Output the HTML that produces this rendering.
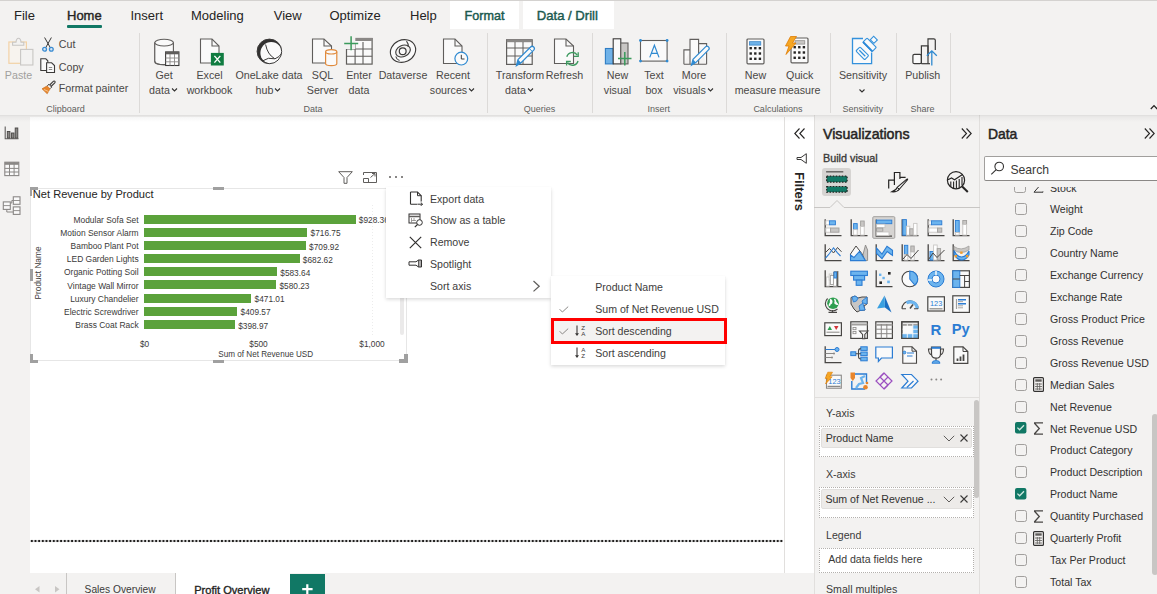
<!DOCTYPE html>
<html><head><meta charset="utf-8"><style>
html,body{margin:0;padding:0;width:1157px;height:594px;overflow:hidden;background:#f3f2f1;font-family:"Liberation Sans",sans-serif;}
.r{position:absolute;}
.t{position:absolute;line-height:16px;white-space:pre;}
.s{position:absolute;overflow:visible;}
</style></head><body>
<div class="r" style="left:0px;top:0px;width:1157px;height:594px;background:#f3f2f1;"></div>
<div class="r" style="left:0px;top:0px;width:1157px;height:1px;background:#d4d2d0;"></div>
<div class="r" style="left:450px;top:1px;width:69px;height:28px;background:#ffffff;"></div>
<div class="r" style="left:522.5px;top:1px;width:91px;height:28px;background:#ffffff;"></div>
<div class="r" style="left:30px;top:117px;width:754px;height:456px;background:#ffffff;"></div>
<div class="r" style="left:784px;top:117px;width:1px;height:456px;background:#e1dfdd;"></div>
<div class="r" style="left:785px;top:117px;width:29px;height:456px;background:#ffffff;"></div>
<div class="r" style="left:814px;top:115px;width:1px;height:479px;background:#e1dfdd;"></div>
<div class="r" style="left:979px;top:115px;width:1px;height:479px;background:#e1dfdd;"></div>
<div class="r" style="left:0px;top:114.5px;width:1157px;height:7px;background:linear-gradient(rgba(0,0,0,0.09),rgba(0,0,0,0.04) 25%,rgba(0,0,0,0) 100%);"></div>
<div class="t" style="left:14px;top:7.5px;font-size:13px;color:#252423;font-weight:normal;">File</div>
<div class="t" style="left:67px;top:7.5px;font-size:13px;color:#252423;font-weight:normal;-webkit-text-stroke:0.4px #252423">Home</div>
<div class="r" style="left:67px;top:25px;width:35px;height:3px;background:#117865;border-radius:1px"></div>
<div class="t" style="left:130.5px;top:7.5px;font-size:13px;color:#252423;font-weight:normal;">Insert</div>
<div class="t" style="left:191px;top:7.5px;font-size:13px;color:#252423;font-weight:normal;">Modeling</div>
<div class="t" style="left:273.75px;top:7.5px;font-size:13px;color:#252423;font-weight:normal;">View</div>
<div class="t" style="left:329.5px;top:7.5px;font-size:13px;color:#252423;font-weight:normal;">Optimize</div>
<div class="t" style="left:410px;top:7.5px;font-size:13px;color:#252423;font-weight:normal;">Help</div>
<div class="t" style="left:464.5px;top:7.5px;font-size:12.6px;color:#1b5a4f;font-weight:normal;-webkit-text-stroke:0.45px #1b5a4f">Format</div>
<div class="t" style="left:536.75px;top:7.5px;font-size:13.1px;color:#1b5a4f;font-weight:normal;-webkit-text-stroke:0.45px #1b5a4f">Data / Drill</div>
<div class="r" style="left:139px;top:33px;width:1px;height:80px;background:#dcdad8;"></div>
<div class="r" style="left:487px;top:33px;width:1px;height:80px;background:#dcdad8;"></div>
<div class="r" style="left:592px;top:33px;width:1px;height:80px;background:#dcdad8;"></div>
<div class="r" style="left:726px;top:33px;width:1px;height:80px;background:#dcdad8;"></div>
<div class="r" style="left:830px;top:33px;width:1px;height:80px;background:#dcdad8;"></div>
<div class="r" style="left:896px;top:33px;width:1px;height:80px;background:#dcdad8;"></div>
<div class="r" style="left:950px;top:33px;width:1px;height:80px;background:#dcdad8;"></div>
<div class="t" style="left:-131.5px;width:300px;text-align:center;top:67.2px;font-size:10.7px;color:#a19f9d;font-weight:normal;">Paste</div>
<div class="t" style="left:58.75px;top:36.0px;font-size:10.7px;color:#4a4846;font-weight:normal;">Cut</div>
<div class="t" style="left:58.75px;top:58.7px;font-size:10.7px;color:#4a4846;font-weight:normal;">Copy</div>
<div class="t" style="left:58.75px;top:80.0px;font-size:10.7px;color:#4a4846;font-weight:normal;">Format painter</div>
<div class="t" style="left:-84.5px;width:300px;text-align:center;top:100.8px;font-size:9px;color:#605e5c;font-weight:normal;">Clipboard</div>
<div class="t" style="left:163px;width:300px;text-align:center;top:100.8px;font-size:9px;color:#605e5c;font-weight:normal;">Data</div>
<div class="t" style="left:389.4px;width:300px;text-align:center;top:100.8px;font-size:9px;color:#605e5c;font-weight:normal;">Queries</div>
<div class="t" style="left:508.75px;width:300px;text-align:center;top:100.8px;font-size:9px;color:#605e5c;font-weight:normal;">Insert</div>
<div class="t" style="left:627.9px;width:300px;text-align:center;top:100.8px;font-size:9px;color:#605e5c;font-weight:normal;">Calculations</div>
<div class="t" style="left:712.75px;width:300px;text-align:center;top:100.8px;font-size:9px;color:#605e5c;font-weight:normal;">Sensitivity</div>
<div class="t" style="left:772.5px;width:300px;text-align:center;top:100.8px;font-size:9px;color:#605e5c;font-weight:normal;">Share</div>
<div class="t" style="left:14px;width:300px;text-align:center;top:67.2px;font-size:10.7px;color:#4a4846;font-weight:normal;">Get</div>
<div class="t" style="left:14px;width:300px;text-align:center;top:82.2px;font-size:10.7px;color:#4a4846;font-weight:normal;">data<svg width="9" height="6" viewBox="0 0 9 6" style="vertical-align:1px"><path d="M2 1.5 L4.5 4 L7 1.5" fill="none" stroke="#323130" stroke-width="1.1"/></svg></div>
<div class="t" style="left:59.5px;width:300px;text-align:center;top:67.2px;font-size:10.7px;color:#4a4846;font-weight:normal;">Excel</div>
<div class="t" style="left:59.5px;width:300px;text-align:center;top:82.2px;font-size:10.7px;color:#4a4846;font-weight:normal;">workbook</div>
<div class="t" style="left:119px;width:300px;text-align:center;top:67.2px;font-size:10.7px;color:#4a4846;font-weight:normal;">OneLake data</div>
<div class="t" style="left:119px;width:300px;text-align:center;top:82.2px;font-size:10.7px;color:#4a4846;font-weight:normal;">hub<svg width="9" height="6" viewBox="0 0 9 6" style="vertical-align:1px"><path d="M2 1.5 L4.5 4 L7 1.5" fill="none" stroke="#323130" stroke-width="1.1"/></svg></div>
<div class="t" style="left:172.5px;width:300px;text-align:center;top:67.2px;font-size:10.7px;color:#4a4846;font-weight:normal;">SQL</div>
<div class="t" style="left:172.5px;width:300px;text-align:center;top:82.2px;font-size:10.7px;color:#4a4846;font-weight:normal;">Server</div>
<div class="t" style="left:209px;width:300px;text-align:center;top:67.2px;font-size:10.7px;color:#4a4846;font-weight:normal;">Enter</div>
<div class="t" style="left:209px;width:300px;text-align:center;top:82.2px;font-size:10.7px;color:#4a4846;font-weight:normal;">data</div>
<div class="t" style="left:253px;width:300px;text-align:center;top:67.2px;font-size:10.7px;color:#4a4846;font-weight:normal;">Dataverse</div>
<div class="t" style="left:303px;width:300px;text-align:center;top:67.2px;font-size:10.7px;color:#4a4846;font-weight:normal;">Recent</div>
<div class="t" style="left:303px;width:300px;text-align:center;top:82.2px;font-size:10.7px;color:#4a4846;font-weight:normal;">sources<svg width="9" height="6" viewBox="0 0 9 6" style="vertical-align:1px"><path d="M2 1.5 L4.5 4 L7 1.5" fill="none" stroke="#323130" stroke-width="1.1"/></svg></div>
<div class="t" style="left:370px;width:300px;text-align:center;top:67.2px;font-size:10.7px;color:#4a4846;font-weight:normal;">Transform</div>
<div class="t" style="left:370px;width:300px;text-align:center;top:82.2px;font-size:10.7px;color:#4a4846;font-weight:normal;">data<svg width="9" height="6" viewBox="0 0 9 6" style="vertical-align:1px"><path d="M2 1.5 L4.5 4 L7 1.5" fill="none" stroke="#323130" stroke-width="1.1"/></svg></div>
<div class="t" style="left:414.5px;width:300px;text-align:center;top:67.2px;font-size:10.7px;color:#4a4846;font-weight:normal;">Refresh</div>
<div class="t" style="left:467.5px;width:300px;text-align:center;top:67.2px;font-size:10.7px;color:#4a4846;font-weight:normal;">New</div>
<div class="t" style="left:467.5px;width:300px;text-align:center;top:82.2px;font-size:10.7px;color:#4a4846;font-weight:normal;">visual</div>
<div class="t" style="left:504px;width:300px;text-align:center;top:67.2px;font-size:10.7px;color:#4a4846;font-weight:normal;">Text</div>
<div class="t" style="left:504px;width:300px;text-align:center;top:82.2px;font-size:10.7px;color:#4a4846;font-weight:normal;">box</div>
<div class="t" style="left:544px;width:300px;text-align:center;top:67.2px;font-size:10.7px;color:#4a4846;font-weight:normal;">More</div>
<div class="t" style="left:544px;width:300px;text-align:center;top:82.2px;font-size:10.7px;color:#4a4846;font-weight:normal;">visuals<svg width="9" height="6" viewBox="0 0 9 6" style="vertical-align:1px"><path d="M2 1.5 L4.5 4 L7 1.5" fill="none" stroke="#323130" stroke-width="1.1"/></svg></div>
<div class="t" style="left:605.5px;width:300px;text-align:center;top:67.2px;font-size:10.7px;color:#4a4846;font-weight:normal;">New</div>
<div class="t" style="left:605.5px;width:300px;text-align:center;top:82.2px;font-size:10.7px;color:#4a4846;font-weight:normal;">measure</div>
<div class="t" style="left:649.75px;width:300px;text-align:center;top:67.2px;font-size:10.7px;color:#4a4846;font-weight:normal;">Quick</div>
<div class="t" style="left:649.75px;width:300px;text-align:center;top:82.2px;font-size:10.7px;color:#4a4846;font-weight:normal;">measure</div>
<div class="t" style="left:713px;width:300px;text-align:center;top:67.2px;font-size:10.7px;color:#4a4846;font-weight:normal;">Sensitivity</div>
<div class="t" style="left:772.75px;width:300px;text-align:center;top:67.2px;font-size:10.7px;color:#4a4846;font-weight:normal;">Publish</div>
<svg class="s" style="left:7px;top:37px;" width="27" height="30" viewBox="0 0 27 30"><rect x="1.9" y="5" width="17.5" height="21.3" fill="#f7f3ee" stroke="#f2d2a6" stroke-width="1.2"/><path d="M5.6 8.3 V5.3 H9 Q9.3 1.2 11.5 1.2 Q13.7 1.2 14 5.3 H16.8 V8.3 Z" fill="#f3f2f1" stroke="#c8c6c4" stroke-width="1.1"/><rect x="13.6" y="12.4" width="12.3" height="15.6" fill="#f3f2f1" stroke="#c8c6c4" stroke-width="1.1"/></svg>
<svg class="s" style="left:42px;top:37px;" width="12" height="15" viewBox="0 0 12 15"><path d="M2.6 0.5 L8.5 11 M9.4 0.5 L3.5 11" stroke="#3b3a39" stroke-width="1"/><circle cx="2.6" cy="12.3" r="1.9" fill="#d5e6f5" stroke="#3a8bd1" stroke-width="1.3"/><circle cx="9.3" cy="12.3" r="1.9" fill="#d5e6f5" stroke="#3a8bd1" stroke-width="1.3"/></svg>
<svg class="s" style="left:40px;top:58px;" width="16" height="16" viewBox="0 0 16 16"><path d="M0.8 0.8 H5.8 L7.8 2.8 V12.5 H0.8 Z" fill="#fafafa" stroke="#3b3a39" stroke-width="1.1"/><path d="M6.6 4.8 H11.6 L14.5 7.6 V14.5 H6.6 Z" fill="#fafafa" stroke="#3b3a39" stroke-width="1.1"/><path d="M8.8 11.5 H12.2 M8.8 9.5 H12.2" stroke="#8a8886" stroke-width="1"/></svg>
<svg class="s" style="left:41px;top:80px;" width="15" height="15" viewBox="0 0 15 15"><path d="M1 8.8 L6.3 5.8 L9.2 8.6 L6.2 13.8 Z" fill="#e8852c" stroke="#c36a1a" stroke-width="0.6"/><path d="M3 9.5 L7.5 11.5" stroke="#f7c48a" stroke-width="1"/><path d="M6.3 5.8 L8 4.3 L10.7 7.1 L9.2 8.6" fill="#f3f2f1" stroke="#3b3a39" stroke-width="1"/><path d="M8.7 5 L12.5 1.2 Q13.6 0.8 14 1.5 Q14.4 2.3 13.8 2.8 L10 6.5" fill="none" stroke="#3b3a39" stroke-width="1.1"/></svg>
<svg class="s" style="left:153px;top:38px;" width="28" height="29" viewBox="0 0 28 29"><path d="M1.8 4.6 V23.4 Q1.8 26.6 11.1 26.6 Q12 26.6 12.6 26.5" fill="#fafafa" stroke="#605e5c" stroke-width="1.1"/><path d="M20.4 4.6 V13.4" fill="none" stroke="#605e5c" stroke-width="1.1"/><rect x="1.8" y="4.6" width="18.6" height="18.8" fill="#fafafa"/><path d="M1.8 4.6 V23.4 Q2 26.6 11.1 26.8 L12.6 26.8 M20.4 4.6 V13.4" fill="none" stroke="#605e5c" stroke-width="1.1"/><ellipse cx="11.1" cy="4.6" rx="9.3" ry="3.4" fill="#fafafa" stroke="#605e5c" stroke-width="1.1"/><rect x="12.6" y="13.9" width="13.3" height="13.6" fill="#fff" stroke="#3b3a39" stroke-width="1.1"/><rect x="12.6" y="13.9" width="13.3" height="2.4" fill="#605e5c"/><path d="M12.6 20 H25.9 M12.6 23.8 H25.9 M17 16 V27.5 M21.5 16 V27.5" stroke="#8a8886" stroke-width="0.9"/></svg>
<svg class="s" style="left:199px;top:38px;" width="26" height="28" viewBox="0 0 26 28"><path d="M1.5 1 H13 L20 8 V25 H1.5 Z" fill="#fafafa" stroke="#605e5c" stroke-width="1.1"/><path d="M13 1 V8 H20" fill="none" stroke="#605e5c" stroke-width="1.1"/><rect x="11.9" y="14.9" width="12.9" height="12.6" fill="#107c41"/><path d="M15.4 17.9 L21.3 24.6 M21.3 17.9 L15.4 24.6" stroke="#fff" stroke-width="1.4"/></svg>
<svg class="s" style="left:256px;top:38px;" width="28" height="28" viewBox="0 0 28 28"><circle cx="13.4" cy="13.4" r="12.3" fill="#323130"/><circle cx="15.2" cy="14.9" r="10.8" fill="#fafafa"/><circle cx="13.4" cy="13.4" r="12.3" fill="none" stroke="#3b3a39" stroke-width="1"/><path d="M9.6 6.5 Q11.5 16.5 18.5 20.5" fill="none" stroke="#3b3a39" stroke-width="1"/><path d="M6.8 22.8 Q12 18.8 19 20.8 Q23.5 19 25.6 15.5" fill="none" stroke="#3b3a39" stroke-width="1"/></svg>
<svg class="s" style="left:311px;top:38px;" width="28" height="29" viewBox="0 0 28 29"><path d="M1.5 1 H13 L20.5 8 V25 H1.5 Z" fill="#fafafa" stroke="#605e5c" stroke-width="1.1"/><path d="M13 1 V8 H20.5" fill="none" stroke="#605e5c" stroke-width="1.1"/><path d="M14.6 13.8 V25.8 Q14.6 27.6 20.2 27.6 Q25.8 27.6 25.8 25.8 V13.8" fill="#fafafa" stroke="#e08a3c" stroke-width="1.2"/><ellipse cx="20.2" cy="13.8" rx="5.6" ry="2.2" fill="#fafafa" stroke="#e08a3c" stroke-width="1.2"/></svg>
<svg class="s" style="left:343px;top:35px;" width="31" height="31" viewBox="0 0 31 31"><rect x="3.5" y="3.5" width="25.6" height="25.6" fill="#fafafa" stroke="#605e5c" stroke-width="1.2"/><rect x="12" y="3" width="17.6" height="3" fill="#8a8886"/><path d="M3.5 14 H29.1 M3.5 21.2 H29.1 M12.1 9 V29.1 M20 7 V29.1" stroke="#605e5c" stroke-width="1.1"/><rect x="0" y="0" width="12.3" height="14" fill="#f3f2f1"/><path d="M1.2 8.5 H15.2 M8.1 1.2 V15.2" stroke="#3a9a5b" stroke-width="1.5"/></svg>
<svg class="s" style="left:385px;top:36px;" width="36" height="30" viewBox="0 0 36 30"><g fill="none"><ellipse cx="18" cy="15" rx="10.3" ry="8.3" transform="rotate(-25 18 15)" stroke="#3b3a39" stroke-width="6.4"/><ellipse cx="18" cy="15" rx="10.3" ry="8.3" transform="rotate(-25 18 15)" stroke="#fafafa" stroke-width="4.2"/><path d="M21.5 5.2 Q23.5 7.5 23.2 11" stroke="#3b3a39" stroke-width="1.1"/><path d="M10.8 20.5 Q11.5 23.5 14.5 24.6" stroke="#3b3a39" stroke-width="1.1"/><circle cx="17.7" cy="15.2" r="3.4" stroke="#3b3a39" stroke-width="1.2" fill="#fafafa"/></g></svg>
<svg class="s" style="left:442px;top:38px;" width="28" height="29" viewBox="0 0 28 29"><path d="M1.5 1 H13 L20 8 V25.5 H1.5 Z" fill="#fafafa" stroke="#605e5c" stroke-width="1.1"/><path d="M13 1 V8 H20" fill="none" stroke="#605e5c" stroke-width="1.1"/><circle cx="19.3" cy="20.6" r="6.4" fill="#fafafa" stroke="#2f8ad1" stroke-width="1.2"/><path d="M19.3 16.8 V21 H22.5" fill="none" stroke="#3b3a39" stroke-width="1"/></svg>
<svg class="s" style="left:505px;top:38px;" width="31" height="30" viewBox="0 0 31 30"><rect x="1.6" y="1.8" width="25.6" height="24.6" fill="#fafafa" stroke="#605e5c" stroke-width="1.2"/><rect x="1.6" y="1.6" width="25.6" height="2.6" fill="#8a8886"/><path d="M1.6 10 H27.2 M1.6 18 H27.2 M10 4 V26.4 M18 4 V26.4" stroke="#605e5c" stroke-width="1"/><path d="M11.4 27.6 L13 21.6 L25.6 9 Q27.2 7.5 28.7 9 Q30.2 10.5 28.7 12.1 L16.1 24.7 Z" fill="#fafafa" stroke="#2f8ad1" stroke-width="1.2"/><path d="M11.4 27.6 L13 21.6 L16.1 24.7 Z" fill="#2f8ad1"/><path d="M24.2 10.4 L27.3 13.5" stroke="#2f8ad1" stroke-width="1"/></svg>
<svg class="s" style="left:553px;top:38px;" width="28" height="29" viewBox="0 0 28 29"><path d="M1.5 1 H13 L20.5 8 V25.5 H1.5 Z" fill="#fafafa" stroke="#605e5c" stroke-width="1.1"/><path d="M13 1 V8 H20.5" fill="none" stroke="#605e5c" stroke-width="1.1"/><path d="M13.8 18.8 A5.8 5.8 0 0 1 24.3 17.2" fill="none" stroke="#3c9a5f" stroke-width="1.4"/><path d="M25 23 A5.8 5.8 0 0 1 14.5 24.6" fill="none" stroke="#3c9a5f" stroke-width="1.4"/><path d="M25.2 14.2 V18.3 H21" fill="none" stroke="#3c9a5f" stroke-width="1.3"/><path d="M13.6 27.6 V23.5 H17.8" fill="none" stroke="#3c9a5f" stroke-width="1.3"/></svg>
<svg class="s" style="left:604px;top:38px;" width="30" height="29" viewBox="0 0 30 29"><rect x="1.4" y="10.5" width="7.8" height="15.4" fill="#6fb2e8" stroke="#2f7dc4" stroke-width="1.1"/><rect x="9.2" y="0.8" width="7.6" height="25.1" fill="#fafafa" stroke="#3b3a39" stroke-width="1.1"/><rect x="16.8" y="5" width="7.2" height="20.9" fill="#c8c6c4" stroke="#605e5c" stroke-width="1.1"/><rect x="15" y="13.5" width="14" height="14" fill="#f3f2f1" opacity="0"/><path d="M14 20.6 H27.5 M20.8 13.9 V27.4" stroke="#3a9a5b" stroke-width="1.5"/></svg>
<svg class="s" style="left:639px;top:39px;" width="30" height="24" viewBox="0 0 30 24"><rect x="1.5" y="1.5" width="26.6" height="20.6" fill="#fafafa" stroke="#605e5c" stroke-width="1.1"/><circle cx="1.5" cy="1.5" r="1.4" fill="#2f8ad1"/><circle cx="28.1" cy="1.5" r="1.4" fill="#2f8ad1"/><circle cx="1.5" cy="22.1" r="1.4" fill="#2f8ad1"/><circle cx="28.1" cy="22.1" r="1.4" fill="#2f8ad1"/><path d="M10.8 18.4 L15.4 6.3 L20 18.4 M12.4 14.3 H18.4" fill="none" stroke="#2f8ad1" stroke-width="1.2"/></svg>
<svg class="s" style="left:682px;top:38px;" width="30" height="29" viewBox="0 0 30 29"><path d="M1.9 26.2 V11.9 H8 M8 26.2 V1.4 H16.6 V26.2 M16.6 5.6 H24.6 V26.2 M1.9 26.2 H24.6" fill="#fafafa" stroke="#605e5c" stroke-width="1.1"/><path d="M9.5 27.2 L11 21.4 L23.5 8.9 Q25 7.5 26.5 8.9 Q28 10.4 26.5 11.9 L14 24.4 Z" fill="#fafafa" stroke="#2f8ad1" stroke-width="1.2"/><path d="M9.5 27.2 L11 21.4 L14 24.4 Z" fill="#2f8ad1"/></svg>
<svg class="s" style="left:745.5px;top:38px;" width="19" height="27" viewBox="0 0 19 27"><rect x="1" y="1" width="17" height="24.8" rx="1" fill="#fafafa" stroke="#605e5c" stroke-width="1.2"/><rect x="3.4" y="3.7" width="11.4" height="3.4" fill="#6fb2e8" stroke="#2f7dc4" stroke-width="0.7"/><rect x="3.5" y="9.0" width="2.4" height="2.4" fill="#252423"/><rect x="3.5" y="14.3" width="2.4" height="2.4" fill="#252423"/><rect x="3.5" y="19.6" width="2.4" height="2.4" fill="#252423"/><rect x="8.1" y="9.0" width="2.4" height="2.4" fill="#252423"/><rect x="8.1" y="14.3" width="2.4" height="2.4" fill="#252423"/><rect x="8.1" y="19.6" width="2.4" height="2.4" fill="#252423"/><rect x="12.7" y="9.0" width="2.4" height="2.4" fill="#252423"/><rect x="12.7" y="14.3" width="2.4" height="2.4" fill="#252423"/><rect x="12.7" y="19.6" width="2.4" height="2.4" fill="#252423"/></svg>
<svg class="s" style="left:790px;top:37px;" width="19" height="27" viewBox="0 0 19 27"><rect x="1" y="1" width="17" height="24.8" rx="1" fill="#fafafa" stroke="#605e5c" stroke-width="1.2"/><rect x="5" y="3.7" width="9.8" height="3.4" fill="#c8c6c4" stroke="#8a8886" stroke-width="0.7"/><rect x="3.5" y="9.0" width="2.4" height="2.4" fill="#252423"/><rect x="3.5" y="14.3" width="2.4" height="2.4" fill="#252423"/><rect x="3.5" y="19.6" width="2.4" height="2.4" fill="#252423"/><rect x="8.1" y="9.0" width="2.4" height="2.4" fill="#252423"/><rect x="8.1" y="14.3" width="2.4" height="2.4" fill="#252423"/><rect x="8.1" y="19.6" width="2.4" height="2.4" fill="#252423"/><rect x="12.7" y="9.0" width="2.4" height="2.4" fill="#252423"/><rect x="12.7" y="14.3" width="2.4" height="2.4" fill="#252423"/><rect x="12.7" y="19.6" width="2.4" height="2.4" fill="#252423"/></svg>
<svg class="s" style="left:784px;top:36px;" width="14" height="20" viewBox="0 0 14 20"><path d="M6.5 0.5 H12.5 L8.5 7 H12 L2 18.5 L5 10 H1.5 Z" fill="#f5a623" stroke="#e07b00" stroke-width="0.8"/></svg>
<svg class="s" style="left:848px;top:34px;" width="36" height="34" viewBox="0 0 36 34"><path d="M15 4.5 H4.5 V29.6 H23.6 V18.5" fill="#fafafa" stroke="#3391dc" stroke-width="1.3"/><g transform="translate(14.3 19.3) rotate(45)"><rect x="-6.2" y="-2.9" width="12.4" height="5.8" rx="1" fill="#fafafa" stroke="#3391dc" stroke-width="1.1"/><path d="M-4.2 0 H4.2" stroke="#3391dc" stroke-width="1.3"/></g><g transform="translate(21.6 10.8) rotate(45)"><rect x="-6.6" y="-3" width="13.2" height="6" rx="0.8" fill="#fafafa" stroke="#3391dc" stroke-width="1.1"/><path d="M-6.6 2.6 H6.6" stroke="#2b88d8" stroke-width="1.8"/></g><g transform="translate(25.8 5.8) rotate(45)"><rect x="-2.6" y="-2.4" width="5.2" height="4.8" fill="#fafafa" stroke="#3391dc" stroke-width="1.1"/></g></svg>
<svg class="s" style="left:911px;top:37px;" width="28" height="30" viewBox="0 0 28 30"><rect x="1.9" y="17.3" width="8.5" height="9.4" rx="1.5" fill="#fafafa" stroke="#3b3a39" stroke-width="1.2"/><path d="M10.4 26.7 V8.8 H17 V26.7" fill="none" stroke="#3b3a39" stroke-width="1.2"/><path d="M17 19 V1.8 H22.8 Q24.3 1.8 24.3 3.3 V13" fill="none" stroke="#3b3a39" stroke-width="1.2"/><path d="M10.4 26.7 H19" stroke="#3b3a39" stroke-width="1.2"/><path d="M20.8 28.5 V14 M15.8 18.8 L20.8 13.8 L25.8 18.8" fill="none" stroke="#2f8ad1" stroke-width="1.3"/></svg>
<svg class="s" style="left:1150px;top:104px;" width="8" height="6" viewBox="0 0 8 6"><path d="M0.8 5 L4 1.6 L7.2 5" fill="none" stroke="#252423" stroke-width="1.3"/></svg>
<svg class="s" style="left:859px;top:88.5px;" width="6" height="4" viewBox="0 0 6 4"><path d="M0.5 0.5 L3 3 L5.5 0.5" fill="none" stroke="#323130" stroke-width="1.1"/></svg>
<svg class="s" style="left:4px;top:126px;" width="15" height="14" viewBox="0 0 15 14"><path d="M1.2 0.5 V12.8 H14.5" fill="none" stroke="#605e5c" stroke-width="1.1"/><rect x="3.3" y="5.5" width="2.6" height="6.6" fill="#8a8886" stroke="#484644" stroke-width="0.9"/><rect x="7.4" y="7" width="2.6" height="5.1" fill="#8a8886" stroke="#484644" stroke-width="0.9"/><rect x="11.2" y="2" width="2.6" height="10.1" fill="#8a8886" stroke="#484644" stroke-width="0.9"/></svg>
<svg class="s" style="left:4px;top:161px;" width="16" height="16" viewBox="0 0 16 16"><rect x="0.8" y="1.2" width="14" height="13.4" fill="#fafafa" stroke="#8a8886" stroke-width="1.1"/><rect x="0.8" y="1.2" width="14" height="2.6" fill="#8a8886"/><path d="M0.8 7.4 H14.8 M0.8 11 H14.8 M5.5 1.2 V14.6 M10.1 1.2 V14.6" stroke="#8a8886" stroke-width="1"/></svg>
<svg class="s" style="left:2px;top:196px;" width="20" height="19" viewBox="0 0 20 19"><rect x="1.3" y="5.9" width="7" height="7.5" fill="#fafafa" stroke="#8a8886" stroke-width="1.1"/><path d="M1.3 9.6 H8.3" stroke="#8a8886" stroke-width="0.9"/><rect x="11.3" y="0.8" width="6.7" height="7.5" fill="#fafafa" stroke="#8a8886" stroke-width="1.1"/><path d="M11.3 4.5 H18" stroke="#8a8886" stroke-width="0.9"/><rect x="11.3" y="10.9" width="6.7" height="7.5" fill="#fafafa" stroke="#8a8886" stroke-width="1.1"/><path d="M11.3 14.6 H18" stroke="#8a8886" stroke-width="0.9"/><path d="M8.3 7 H9.8 V4.5 H11.3 M4.8 13.4 V16 H11.3" fill="none" stroke="#8a8886" stroke-width="1"/></svg>
<div class="r" style="left:30.3px;top:538.6px;width:753px;height:4px;background-image:radial-gradient(circle,#201f1e 0.95px,rgba(32,31,30,0.5) 1.25px,transparent 1.6px);background-size:3.667px 4px;"></div>
<svg class="s" style="left:338px;top:171px;" width="15" height="13" viewBox="0 0 15 13"><path d="M0.7 0.7 H14.3 L9 6.5 V12.3 H6 V6.5 Z" fill="none" stroke="#605e5c" stroke-width="1"/></svg>
<svg class="s" style="left:363px;top:172px;" width="14" height="11" viewBox="0 0 14 11"><path d="M0.5 3 V0.5 H13.5 V10.5 H0.5 V6.5 H5.5 V10.5" fill="none" stroke="#605e5c"/><path d="M7.5 5.5 L12 1.5 M9 1.5 H12 V4.5" fill="none" stroke="#605e5c"/></svg>
<div class="r" style="left:388.5px;top:176px;width:2px;height:2px;background:#605e5c;border-radius:1px"></div>
<div class="r" style="left:394.5px;top:176px;width:2px;height:2px;background:#605e5c;border-radius:1px"></div>
<div class="r" style="left:400.5px;top:176px;width:2px;height:2px;background:#605e5c;border-radius:1px"></div>
<div class="r" style="left:30px;top:188px;width:376px;height:1px;background:#e6e6e6;"></div>
<div class="r" style="left:30px;top:360px;width:377px;height:1px;background:#e6e6e6;"></div>
<div class="r" style="left:30px;top:188px;width:1px;height:173px;background:#e6e6e6;"></div>
<div class="r" style="left:406px;top:188px;width:1px;height:173px;background:#e6e6e6;"></div>
<div class="r" style="left:30px;top:187.4px;width:8px;height:2.7px;background:#a0a0a0;"></div>
<div class="r" style="left:30px;top:187.4px;width:2px;height:9.1px;background:#a0a0a0;"></div>
<div class="r" style="left:30px;top:359.5px;width:8px;height:3px;background:#a0a0a0;"></div>
<div class="r" style="left:30px;top:354px;width:3px;height:8.5px;background:#a0a0a0;"></div>
<div class="r" style="left:399px;top:359.3px;width:8.8px;height:3.5px;background:#a0a0a0;"></div>
<div class="r" style="left:404.2px;top:354px;width:3.6px;height:8.8px;background:#a0a0a0;"></div>
<div class="r" style="left:212.6px;top:187.3px;width:11.2px;height:2.8px;background:#a0a0a0;"></div>
<div class="r" style="left:212.6px;top:359.5px;width:11.2px;height:3px;background:#a0a0a0;"></div>
<div class="r" style="left:30px;top:269px;width:2.7px;height:11.5px;background:#a0a0a0;"></div>
<div class="r" style="left:399.8px;top:195px;width:4.4px;height:140px;background:#ebeaea;border-radius:2px"></div>
<div class="t" style="left:32.8px;top:186.4px;font-size:11.1px;color:#252423;font-weight:normal;">Net Revenue by Product</div>
<div class="r" style="left:144px;top:214.6px;width:211.7px;height:9px;background:#5ba23b;"></div>
<div class="t" style="left:-161.4px;width:300px;text-align:right;top:211.7px;font-size:8.45px;color:#3b3a39;font-weight:normal;">Modular Sofa Set</div>
<div class="t" style="left:358.86608px;top:212.2px;font-size:8.3px;color:#3b3a39;font-weight:normal;">$928.36</div>
<div class="r" style="left:144px;top:227.8px;width:163.4px;height:9px;background:#5ba23b;"></div>
<div class="t" style="left:-161.4px;width:300px;text-align:right;top:224.86999999999998px;font-size:8.45px;color:#3b3a39;font-weight:normal;">Motion Sensor Alarm</div>
<div class="t" style="left:310.61899999999997px;top:225.36999999999998px;font-size:8.3px;color:#3b3a39;font-weight:normal;">$716.75</div>
<div class="r" style="left:144px;top:240.9px;width:161.9px;height:9px;background:#5ba23b;"></div>
<div class="t" style="left:-161.4px;width:300px;text-align:right;top:238.04px;font-size:8.45px;color:#3b3a39;font-weight:normal;">Bamboo Plant Pot</div>
<div class="t" style="left:309.06176px;top:238.54px;font-size:8.3px;color:#3b3a39;font-weight:normal;">$709.92</div>
<div class="r" style="left:144px;top:254.1px;width:155.6px;height:9px;background:#5ba23b;"></div>
<div class="t" style="left:-161.4px;width:300px;text-align:right;top:251.20999999999998px;font-size:8.45px;color:#3b3a39;font-weight:normal;">LED Garden Lights</div>
<div class="t" style="left:302.83736px;top:251.70999999999998px;font-size:8.3px;color:#3b3a39;font-weight:normal;">$682.62</div>
<div class="r" style="left:144px;top:267.3px;width:133.1px;height:9px;background:#5ba23b;"></div>
<div class="t" style="left:-161.4px;width:300px;text-align:right;top:264.38px;font-size:8.45px;color:#3b3a39;font-weight:normal;">Organic Potting Soil</div>
<div class="t" style="left:280.26992px;top:264.88px;font-size:8.3px;color:#3b3a39;font-weight:normal;">$583.64</div>
<div class="r" style="left:144px;top:280.4px;width:132.3px;height:9px;background:#5ba23b;"></div>
<div class="t" style="left:-161.4px;width:300px;text-align:right;top:277.55px;font-size:8.45px;color:#3b3a39;font-weight:normal;">Vintage Wall Mirror</div>
<div class="t" style="left:279.49244px;top:278.05px;font-size:8.3px;color:#3b3a39;font-weight:normal;">$580.23</div>
<div class="r" style="left:144px;top:293.6px;width:107.4px;height:9px;background:#5ba23b;"></div>
<div class="t" style="left:-161.4px;width:300px;text-align:right;top:290.72px;font-size:8.45px;color:#3b3a39;font-weight:normal;">Luxury Chandelier</div>
<div class="t" style="left:254.59028px;top:291.22px;font-size:8.3px;color:#3b3a39;font-weight:normal;">$471.01</div>
<div class="r" style="left:144px;top:306.8px;width:93.4px;height:9px;background:#5ba23b;"></div>
<div class="t" style="left:-161.4px;width:300px;text-align:right;top:303.89px;font-size:8.45px;color:#3b3a39;font-weight:normal;">Electric Screwdriver</div>
<div class="t" style="left:240.58195999999998px;top:304.39px;font-size:8.3px;color:#3b3a39;font-weight:normal;">$409.57</div>
<div class="r" style="left:144px;top:320.0px;width:91.0px;height:9px;background:#5ba23b;"></div>
<div class="t" style="left:-161.4px;width:300px;text-align:right;top:317.06px;font-size:8.45px;color:#3b3a39;font-weight:normal;">Brass Coat Rack</div>
<div class="t" style="left:238.16516000000001px;top:317.56px;font-size:8.3px;color:#3b3a39;font-weight:normal;">$398.97</div>
<div class="r" style="left:372px;top:205px;width:1px;height:130px;background-image:linear-gradient(#ececec 50%,transparent 50%);background-size:1px 3px;"></div>
<div class="t" style="left:-5.5px;width:300px;text-align:center;top:336.0px;font-size:8.3px;color:#3b3a39;font-weight:normal;">$0</div>
<div class="t" style="left:108.5px;width:300px;text-align:center;top:335.8px;font-size:8.3px;color:#3b3a39;font-weight:normal;">$500</div>
<div class="t" style="left:222px;width:300px;text-align:center;top:335.8px;font-size:8.3px;color:#3b3a39;font-weight:normal;">$1,000</div>
<div class="t" style="left:115.69999999999999px;width:300px;text-align:center;top:347.2px;font-size:8.14px;color:#3b3a39;font-weight:normal;">Sum of Net Revenue USD</div>
<div class="t" style="left:30px;top:265px;width:16px;height:16px;font-size:8.3px;color:#3b3a39;transform-origin:8px 8px;transform:translate(0px,0px) rotate(-90deg);"><div style="position:absolute;left:-30px;width:76px;text-align:center;top:0;line-height:16px">Product Name</div></div>
<div class="r" style="left:386px;top:187px;width:165px;height:111px;background:#fff;box-shadow:0 1.6px 3.6px rgba(0,0,0,0.16),0 0.3px 0.9px rgba(0,0,0,0.13);"></div>
<div class="t" style="left:430px;top:190.6px;font-size:10.6px;color:#3e3d3c;font-weight:normal;">Export data</div>
<div class="t" style="left:430px;top:212.35px;font-size:10.6px;color:#3e3d3c;font-weight:normal;">Show as a table</div>
<div class="t" style="left:430px;top:234.1px;font-size:10.6px;color:#3e3d3c;font-weight:normal;">Remove</div>
<div class="t" style="left:430px;top:255.85000000000002px;font-size:10.6px;color:#3e3d3c;font-weight:normal;">Spotlight</div>
<div class="t" style="left:430px;top:277.6px;font-size:10.6px;color:#3e3d3c;font-weight:normal;">Sort axis</div>
<svg class="s" style="left:532px;top:279.5px;" width="9" height="13" viewBox="0 0 9 13"><path d="M1.5 1 L7.2 6.2 L1.5 11.4" fill="none" stroke="#605e5c" stroke-width="1.25"/></svg>
<svg class="s" style="left:409px;top:191px;" width="15" height="15" viewBox="0 0 15 15"><path d="M1.5 1 H8.5 L12.2 4.7 V10.5 M8.2 13.2 H1.5 Z M1.5 1 V13.2" fill="none" stroke="#323130" stroke-width="1.1"/><path d="M8.5 1 V4.7 H12.2" fill="none" stroke="#323130" stroke-width="1"/><path d="M8.5 13.2 H13.5 M11.8 11.5 L13.5 13.2 L11.8 14.9" fill="none" stroke="#323130" stroke-width="1"/></svg>
<svg class="s" style="left:408px;top:213px;" width="16" height="15" viewBox="0 0 16 15"><rect x="1" y="1" width="11" height="9" fill="none" stroke="#323130" stroke-width="1"/><path d="M1 3.5 H12" stroke="#605e5c" stroke-width="1.5"/><path d="M3.5 5 V10 M6 5 V8 M3.5 7.5 H8" stroke="#8a8886" stroke-width="0.8"/><circle cx="11.5" cy="9.5" r="2.8" fill="#fff" stroke="#323130" stroke-width="1"/><path d="M9.5 11.5 L6.8 14.2" stroke="#323130" stroke-width="1.1"/></svg>
<svg class="s" style="left:409px;top:236px;" width="13" height="13" viewBox="0 0 13 13"><path d="M0.8 0.8 L12.2 12.2 M12.2 0.8 L0.8 12.2" stroke="#323130" stroke-width="1.2"/></svg>
<svg class="s" style="left:408px;top:259px;" width="15" height="9" viewBox="0 0 15 9"><path d="M1 2.8 H8 L10.5 1 H13.5 V8 H10.5 L8 6.2 H1 Z" fill="none" stroke="#323130" stroke-width="1"/><path d="M10.5 1 V8 M12 1 V8" stroke="#323130" stroke-width="0.8"/></svg>
<div class="r" style="left:551px;top:276px;width:174px;height:89px;background:#fff;box-shadow:0 1.6px 3.6px rgba(0,0,0,0.16),0 0.3px 0.9px rgba(0,0,0,0.13);"></div>
<div class="r" style="left:553px;top:320px;width:171px;height:22px;background:#f3f2f1;"></div>
<div class="r" style="left:551px;top:318px;width:169.5px;height:19.5px;border:3px solid #ff0000;"></div>
<svg class="s" style="left:559px;top:305.5px;" width="10" height="7" viewBox="0 0 10 7"><path d="M0.6 3.2 L3.4 6 L9.2 0.6" fill="none" stroke="#8a8886" stroke-width="1"/></svg>
<svg class="s" style="left:559px;top:327.5px;" width="10" height="7" viewBox="0 0 10 7"><path d="M0.6 3.2 L3.4 6 L9.2 0.6" fill="none" stroke="#8a8886" stroke-width="1"/></svg>
<svg class="s" style="left:575px;top:325px;" width="12" height="12" viewBox="0 0 12 12"><path d="M2 0.5 V10" stroke="#3b3a39" stroke-width="1.1"/><path d="M0 8.3 L2 11 L4 8.3 Z" fill="#3b3a39"/><text x="8.2" y="5" font-family="Liberation Sans" font-size="6.2" fill="#3b3a39" text-anchor="middle">Z</text><text x="8.2" y="11.2" font-family="Liberation Sans" font-size="6.2" fill="#3b3a39" text-anchor="middle">A</text></svg>
<svg class="s" style="left:575px;top:347px;" width="12" height="12" viewBox="0 0 12 12"><path d="M2 0.5 V10" stroke="#3b3a39" stroke-width="1.1"/><path d="M0 8.3 L2 11 L4 8.3 Z" fill="#3b3a39"/><text x="8.2" y="5" font-family="Liberation Sans" font-size="6.2" fill="#3b3a39" text-anchor="middle">A</text><text x="8.2" y="11.2" font-family="Liberation Sans" font-size="6.2" fill="#3b3a39" text-anchor="middle">Z</text></svg>
<div class="t" style="left:595.2px;top:278.6px;font-size:10.6px;color:#3e3d3c;font-weight:normal;">Product Name</div>
<div class="t" style="left:595.2px;top:300.70000000000005px;font-size:10.6px;color:#3e3d3c;font-weight:normal;">Sum of Net Revenue USD</div>
<div class="t" style="left:595.2px;top:322.8px;font-size:10.6px;color:#3e3d3c;font-weight:normal;">Sort descending</div>
<div class="t" style="left:595.2px;top:344.90000000000003px;font-size:10.6px;color:#3e3d3c;font-weight:normal;">Sort ascending</div>
<svg class="s" style="left:794px;top:128px;" width="12" height="11" viewBox="0 0 12 11"><path d="M5.5 0.5 L0.8 5.5 L5.5 10.5 M10.5 0.5 L5.8 5.5 L10.5 10.5" fill="none" stroke="#252423" stroke-width="1.1"/></svg>
<svg class="s" style="left:796px;top:153px;" width="11" height="11" viewBox="0 0 11 11"><path d="M10.3 0.7 V10.3 L5 6.5 H1 V4.5 H5 Z" fill="none" stroke="#3b3a39" stroke-width="1"/></svg>
<div class="t" style="left:792px;top:172px;width:14px;height:40px;"><div style="position:absolute;left:14px;top:0;transform-origin:0 0;transform:rotate(90deg);font-size:13px;font-weight:bold;color:#252423;line-height:14px;white-space:pre">Filters</div></div>
<div class="t" style="left:823px;top:126.1px;font-size:14.2px;color:#252423;font-weight:normal;-webkit-text-stroke:0.5px #252423">Visualizations</div>
<svg class="s" style="left:961px;top:128px;" width="11" height="11" viewBox="0 0 11 11"><path d="M0.8 0.5 L5.5 5.5 L0.8 10.5 M5.5 0.5 L10.2 5.5 L5.5 10.5" fill="none" stroke="#252423" stroke-width="1.1"/></svg>
<div class="t" style="left:823px;top:149.5px;font-size:10.8px;color:#3b3a39;font-weight:normal;-webkit-text-stroke:0.35px #3b3a39">Build visual</div>
<div class="r" style="left:822.4px;top:167.7px;width:28.6px;height:28.6px;background:#d6d4d2;border-radius:3px"></div>
<svg class="s" style="left:824px;top:170px;" width="26" height="25" viewBox="0 0 26 25"><path d="M2.1 1.8 H19.3" stroke="#605e5c" stroke-width="1.4"/><rect x="2.7" y="6.1" width="20.4" height="6" fill="#117865" stroke="#252423" stroke-width="1.2" stroke-dasharray="1.6 1.4"/><rect x="2.7" y="16.5" width="20.4" height="5.6" fill="#117865" stroke="#252423" stroke-width="1.2" stroke-dasharray="1.6 1.4"/></svg>
<svg class="s" style="left:887px;top:171px;" width="22" height="23" viewBox="0 0 22 23"><path d="M1.7 17.5 V9.2 H7.4 M7.4 14 V1.5 H12.9 V8 M12.9 6.3 H18.6" fill="none" stroke="#252423" stroke-width="1.2"/><path d="M5.5 20.2 Q9 19.5 10.5 16 L19.8 8.2 Q21 7.5 20.5 8.8 L12.5 18 Q10 21.5 4.5 20.8 Z" fill="#fafafa" stroke="#252423" stroke-width="1.1"/><path d="M10.2 16.5 L12.5 18.3" stroke="#252423" stroke-width="1"/></svg>
<svg class="s" style="left:946px;top:170px;" width="24" height="24" viewBox="0 0 24 24"><circle cx="10" cy="10.2" r="8.6" fill="none" stroke="#252423" stroke-width="1.2"/><path d="M2 9.8 L5.5 8 L8.5 9.8 L16.5 4.5" fill="none" stroke="#252423" stroke-width="1.1"/><path d="M4.8 11.5 V16.5 M7.6 11.5 V18 M10.4 10.5 V18.5 M13.2 9 V17.8 M16 7 V15.5" stroke="#252423" stroke-width="1.1"/><path d="M16.2 16.5 L21.8 22" stroke="#252423" stroke-width="2"/></svg>
<svg class="s" style="left:814px;top:199px;" width="166" height="10" viewBox="0 0 166 10"><path d="M0 8.5 H16 L23 1.5 L30 8.5 H166" fill="none" stroke="#c8c6c4" stroke-width="1"/></svg>
<svg class="s" style="left:824.2px;top:218.6px;" width="18" height="18" viewBox="0 0 18 18"><path d="M1.2 0.3 V16.6 H17.5" fill="none" stroke="#484644" stroke-width="1.3"/><rect x="1.8" y="1.8" width="3.6" height="4" fill="#ffffff" stroke="#c8c6c4" stroke-width="0.9"/><rect x="5.4" y="1.8" width="6" height="4" fill="#6cb4ee" stroke="#2b7cd3" stroke-width="0.9"/><rect x="1.8" y="9" width="4.8" height="4.2" fill="#ffffff" stroke="#c8c6c4" stroke-width="0.9"/><rect x="6.6" y="9" width="8.4" height="4.2" fill="#c8c6c4" stroke="#a19f9d" stroke-width="0.9"/></svg>
<svg class="s" style="left:849.8px;top:218.6px;" width="18" height="18" viewBox="0 0 18 18"><path d="M1.2 0.3 V16.6 H17.5" fill="none" stroke="#484644" stroke-width="1.3"/><rect x="3.6" y="4.6" width="3.6" height="6" fill="#6cb4ee" stroke="#2b7cd3" stroke-width="0.9"/><rect x="3.6" y="10.6" width="3.6" height="5.5" fill="#ffffff" stroke="#c8c6c4" stroke-width="0.9"/><rect x="10.6" y="2" width="3.6" height="5.5" fill="#c8c6c4" stroke="#a19f9d" stroke-width="0.9"/><rect x="10.6" y="7.5" width="3.6" height="8.6" fill="#ffffff" stroke="#c8c6c4" stroke-width="0.9"/></svg>
<svg class="s" style="left:875.4px;top:218.6px;" width="18" height="18" viewBox="0 0 18 18"><rect x="-2.2" y="-2.3" width="22" height="21.6" rx="1" fill="#d6d4d2" stroke="#a19f9d" stroke-width="1"/><path d="M1.2 0.5 V17.2 H17" fill="none" stroke="#484644" stroke-width="1.2"/><rect x="1.6" y="1.1" width="15.2" height="3.6" fill="#6cb4ee" stroke="#2b7cd3" stroke-width="0.9"/><rect x="1.6" y="5.2" width="8.4" height="3.4" fill="#ffffff" stroke="#c8c6c4" stroke-width="0.9"/><rect x="1.6" y="9.1" width="6.2" height="3.4" fill="#c8c6c4" stroke="#a19f9d" stroke-width="0.9"/><rect x="1.6" y="13" width="12.4" height="3.4" fill="#ffffff" stroke="#c8c6c4" stroke-width="0.9"/></svg>
<svg class="s" style="left:901px;top:218.6px;" width="18" height="18" viewBox="0 0 18 18"><path d="M1.2 0.3 V16.6 H17.5" fill="none" stroke="#484644" stroke-width="1.3"/><rect x="1.8" y="0.6" width="3.6" height="15.6" fill="#6cb4ee" stroke="#2b7cd3" stroke-width="0.9"/><rect x="5.4" y="7.2" width="3.4" height="9" fill="#ffffff" stroke="#c8c6c4" stroke-width="0.9"/><rect x="8.8" y="9.8" width="3.4" height="6.4" fill="#c8c6c4" stroke="#a19f9d" stroke-width="0.9"/><rect x="12.6" y="4.4" width="3.4" height="11.8" fill="#ffffff" stroke="#c8c6c4" stroke-width="0.9"/></svg>
<svg class="s" style="left:926.6px;top:218.6px;" width="18" height="18" viewBox="0 0 18 18"><path d="M1.2 0.3 V16.6 H17.5" fill="none" stroke="#484644" stroke-width="1.3"/><rect x="1.8" y="1.8" width="2.6" height="4" fill="#ffffff" stroke="#c8c6c4" stroke-width="0.9"/><rect x="4.4" y="1.8" width="10.4" height="4" fill="#6cb4ee" stroke="#2b7cd3" stroke-width="0.9"/><rect x="1.8" y="9" width="8.8" height="4.2" fill="#ffffff" stroke="#c8c6c4" stroke-width="0.9"/><rect x="10.6" y="9" width="4.2" height="4.2" fill="#c8c6c4" stroke="#a19f9d" stroke-width="0.9"/></svg>
<svg class="s" style="left:952.2px;top:218.6px;" width="18" height="18" viewBox="0 0 18 18"><path d="M1.2 0.3 V16.6 H17.5" fill="none" stroke="#484644" stroke-width="1.3"/><rect x="3.4" y="1.5" width="3.8" height="12" fill="#6cb4ee" stroke="#2b7cd3" stroke-width="0.9"/><rect x="3.4" y="13.5" width="3.8" height="2.6" fill="#ffffff" stroke="#c8c6c4" stroke-width="0.9"/><rect x="10.8" y="1.5" width="3.8" height="4" fill="#c8c6c4" stroke="#a19f9d" stroke-width="0.9"/><rect x="10.8" y="5.5" width="3.8" height="10.6" fill="#ffffff" stroke="#c8c6c4" stroke-width="0.9"/></svg>
<svg class="s" style="left:824.2px;top:244.1px;" width="18" height="18" viewBox="0 0 18 18"><path d="M1.2 0.3 V16.6 H17.5" fill="none" stroke="#484644" stroke-width="1.3"/><polyline points="1.5,8.5 5.5,4.5 9.5,9 13.5,3.5 17.5,7.8" fill="none" stroke="#484644" stroke-width="1"/><polyline points="1.5,14.2 5.5,9.5 9.5,3.8 13.5,8.8 16.5,12" fill="none" stroke="#2b7cd3" stroke-width="1.1"/></svg>
<svg class="s" style="left:849.8px;top:244.1px;" width="18" height="18" viewBox="0 0 18 18"><path d="M11.5 16.5 L15.5 1 L17.6 6 V16.5 Z" fill="#c8c6c4" stroke="#8a8886" stroke-width="0.9"/><path d="M0.5 16.5 V10 L6 2 L11.8 9.5 L15 16.5 Z" fill="#fafafa" stroke="#484644" stroke-width="1"/><path d="M0.5 16.6 V11 L4 13.5 L9.5 7.3 L15.5 16.6 Z" fill="#6cb4ee" stroke="#2b7cd3" stroke-width="1.1"/></svg>
<svg class="s" style="left:875.4px;top:244.1px;" width="18" height="18" viewBox="0 0 18 18"><path d="M1.2 0.3 V16.6 H17.5" fill="none" stroke="#484644" stroke-width="1.3"/><path d="M1.6 4 L7 10 L12 2.2 L17.5 6.2 V11.5 L12.2 7.5 L7 14.6 L1.6 9.5 Z" fill="#6cb4ee" stroke="#2b7cd3" stroke-width="1.1"/></svg>
<svg class="s" style="left:901px;top:244.1px;" width="18" height="18" viewBox="0 0 18 18"><path d="M1.2 0.3 V16.6 H17.5" fill="none" stroke="#484644" stroke-width="1.3"/><rect x="3.4" y="1.3" width="3.4" height="9.2" fill="#6cb4ee" stroke="#2b7cd3" stroke-width="0.9"/><rect x="3.4" y="10.5" width="3.4" height="5.6" fill="#ffffff" stroke="#c8c6c4" stroke-width="0.9"/><rect x="9.8" y="2" width="3.4" height="6" fill="#c8c6c4" stroke="#a19f9d" stroke-width="0.9"/><rect x="9.8" y="8" width="3.4" height="8.1" fill="#ffffff" stroke="#c8c6c4" stroke-width="0.9"/><polyline points="1.5,15.6 6,10.5 10,14.5 17.5,6" fill="none" stroke="#484644" stroke-width="1"/></svg>
<svg class="s" style="left:926.6px;top:244.1px;" width="18" height="18" viewBox="0 0 18 18"><path d="M1.2 0.3 V16.6 H17.5" fill="none" stroke="#484644" stroke-width="1.3"/><rect x="3" y="7.5" width="3.6" height="8.6" fill="#6cb4ee" stroke="#2b7cd3" stroke-width="0.9"/><rect x="6.6" y="1" width="3.6" height="15.1" fill="#ffffff" stroke="#c8c6c4" stroke-width="0.9"/><rect x="10.2" y="4.6" width="3.4" height="11.5" fill="#c8c6c4" stroke="#a19f9d" stroke-width="0.9"/><polyline points="1.5,15.6 6,9 10,13.5 17.5,6" fill="none" stroke="#484644" stroke-width="1"/></svg>
<svg class="s" style="left:952.2px;top:244.1px;" width="18" height="18" viewBox="0 0 18 18"><path d="M1.2 0.3 V16.6 H17.5" fill="none" stroke="#484644" stroke-width="1.3"/><path d="M2 2.5 Q9 7.5 17 2 V6 Q9 11 2 6 Z" fill="#c8c6c4" stroke="#a19f9d" stroke-width="0.8"/><path d="M2 6.5 Q5 13 9.5 13 Q14 13 17 7 V11 Q14 16 9.5 16 Q5 16 2 10 Z" fill="#6cb4ee" stroke="#2b7cd3" stroke-width="1.1"/><rect x="2.6" y="11" width="2.4" height="2.4" fill="#f29c2b"/><rect x="8.2" y="7.5" width="2.4" height="2.4" fill="#f29c2b"/><rect x="14" y="11" width="2.4" height="2.4" fill="#f29c2b"/></svg>
<svg class="s" style="left:824.2px;top:269.6px;" width="18" height="18" viewBox="0 0 18 18"><path d="M1.2 0.3 V16.6 H17.5" fill="none" stroke="#484644" stroke-width="1.3"/><rect x="2.6" y="7" width="2.6" height="9.1" fill="#ffffff" stroke="#c8c6c4" stroke-width="0.9"/><rect x="5.2" y="4" width="2.6" height="6" fill="#ffffff" stroke="#c8c6c4" stroke-width="0.9"/><rect x="9.6" y="2" width="3.4" height="14.1" fill="#ffffff" stroke="#c8c6c4" stroke-width="0.9"/><rect x="6.4" y="5.5" width="3" height="9" fill="#ffffff" stroke="#a19f9d" stroke-width="0.9"/><path d="M10 6 V2 H13 V16" fill="none" stroke="#484644" stroke-width="0.9"/><rect x="10" y="2" width="2.4" height="6" fill="#6cb4ee" stroke="#2b7cd3" stroke-width="0.9"/><path d="M13.8 1 V16" stroke="#484644" stroke-width="1"/></svg>
<svg class="s" style="left:849.8px;top:269.6px;" width="18" height="18" viewBox="0 0 18 18"><rect x="0.8" y="1.2" width="16.6" height="4.3" fill="#6cb4ee" stroke="#2b7cd3" stroke-width="1.1"/><rect x="3.6" y="5.5" width="11" height="4.6" fill="#6cb4ee" stroke="#2b7cd3" stroke-width="1.1"/><rect x="6.2" y="10.1" width="5.8" height="5.2" fill="#6cb4ee" stroke="#2b7cd3" stroke-width="1.1"/></svg>
<svg class="s" style="left:875.4px;top:269.6px;" width="18" height="18" viewBox="0 0 18 18"><path d="M1.2 0.3 V16.6 H17.5" fill="none" stroke="#484644" stroke-width="1.3"/><rect x="13" y="2" width="2.6" height="2.6" fill="#252423"/><rect x="4" y="3.6" width="2.4" height="2.4" fill="#6cb4ee"/><rect x="7.4" y="6.8" width="2.4" height="2.4" fill="#6cb4ee"/><rect x="12.2" y="10.6" width="2.6" height="2.6" fill="#6cb4ee"/><rect x="4.4" y="11.4" width="2.6" height="2.6" fill="#252423"/></svg>
<svg class="s" style="left:901px;top:269.6px;" width="18" height="18" viewBox="0 0 18 18"><circle cx="8.8" cy="9" r="7.8" fill="#fafafa" stroke="#484644" stroke-width="1.1"/><path d="M8.8 1.2 A7.8 7.8 0 0 1 13.8 15 L8.8 9 Z" fill="#6cb4ee" stroke="#2b7cd3" stroke-width="1.1"/></svg>
<svg class="s" style="left:926.6px;top:269.6px;" width="18" height="18" viewBox="0 0 18 18"><circle cx="9" cy="9" r="6" fill="none" stroke="#6cb4ee" stroke-width="4"/><circle cx="9" cy="9" r="8" fill="none" stroke="#2b7cd3" stroke-width="1"/><circle cx="9" cy="9" r="4" fill="#fafafa" stroke="#2b7cd3" stroke-width="1"/><path d="M9 1 V5 M1 10 H5" stroke="#fafafa" stroke-width="1.5"/></svg>
<svg class="s" style="left:952.2px;top:269.6px;" width="18" height="18" viewBox="0 0 18 18"><rect x="0.8" y="0.8" width="16.6" height="16.6" fill="#fafafa" stroke="#484644" stroke-width="1.2"/><rect x="0.8" y="0.8" width="7" height="16.6" fill="#6cb4ee" stroke="#2b7cd3" stroke-width="1"/><path d="M0.8 9 H7.8 M7.8 5.5 H17.4 M12.6 5.5 V17.4 M12.6 11.5 H17.4" stroke="#484644" stroke-width="1"/></svg>
<svg class="s" style="left:824.2px;top:295.1px;" width="18" height="18" viewBox="0 0 18 18"><circle cx="9" cy="8.2" r="5.8" fill="#2e9e4f"/><path d="M6 4.5 Q8.5 5.5 7.5 8 Q5 9 5.5 11 M10.5 4 Q12 6 11 8 Q13 10 14 9" fill="#fafafa" stroke="#fafafa" stroke-width="1.5"/><path d="M3.6 3.5 A7 7 0 0 0 13.5 14" fill="none" stroke="#484644" stroke-width="1.1"/><path d="M8.5 15 V17 M4.5 17.3 H13" stroke="#484644" stroke-width="1.2"/></svg>
<svg class="s" style="left:849.8px;top:295.1px;" width="18" height="18" viewBox="0 0 18 18"><path d="M1 2.5 L5 1 L8 3 L12 2 L17 2 V9 L14 11 L15 15 L10 15.5 L7 17 L4 14 L1 9 Z" fill="#c8c6c4" stroke="#484644" stroke-width="1"/><path d="M2 2.2 L5 1 L8 3 L6.5 6 L3.5 7 Z" fill="#6cb4ee" stroke="#2b7cd3" stroke-width="0.9"/><path d="M10 15.5 L9 11 L13 8 L17 9 V2 L12 6 L15 15 Z" fill="#6cb4ee" stroke="#2b7cd3" stroke-width="0.9"/></svg>
<svg class="s" style="left:875.4px;top:295.1px;" width="18" height="18" viewBox="0 0 18 18"><path d="M9.5 0.5 L16.5 17.5 L10 12.5 Z" fill="#1b6fc2"/><path d="M9.5 0.5 L10 12.5 L2 13.5 Z" fill="#3aa0e0"/></svg>
<svg class="s" style="left:901px;top:295.1px;" width="18" height="18" viewBox="0 0 18 18"><path d="M1 13.8 A8 8 0 0 1 17 13.8" fill="none" stroke="#484644" stroke-width="1.2"/><path d="M5.5 8 A7 7 0 0 1 16.3 13.5" fill="none" stroke="#6cb4ee" stroke-width="3.2"/><path d="M9 13.5 L12 9.5" stroke="#484644" stroke-width="1.6"/><path d="M1 13.8 H5 M13 13.8 H17" stroke="#484644" stroke-width="1.1"/></svg>
<svg class="s" style="left:926.6px;top:295.1px;" width="18" height="18" viewBox="0 0 18 18"><rect x="0.8" y="1.8" width="16.6" height="14.2" fill="#fafafa" stroke="#484644" stroke-width="1.2"/><text x="9.1" y="11.2" font-family="Liberation Sans" font-size="7.4" fill="#2b7cd3" text-anchor="middle">123</text><path d="M2.5 13.8 H15.5" stroke="#8a8886" stroke-width="1.2"/></svg>
<svg class="s" style="left:952.2px;top:295.1px;" width="18" height="18" viewBox="0 0 18 18"><rect x="0.8" y="0.8" width="16.6" height="16.6" fill="#fafafa" stroke="#484644" stroke-width="1.2"/><path d="M4.5 4 V14" stroke="#a19f9d" stroke-width="1.2"/><path d="M6 4.8 H14 M6 8.8 H14" stroke="#2b7cd3" stroke-width="1.4"/><path d="M6 6.6 H11 M6 10.8 H11 M6 12.8 H11" stroke="#a19f9d" stroke-width="0.9"/></svg>
<svg class="s" style="left:824.2px;top:320.6px;" width="18" height="18" viewBox="0 0 18 18"><rect x="0.8" y="1.8" width="16.6" height="12.8" fill="#fafafa" stroke="#484644" stroke-width="1.2"/><path d="M3.5 9 L5.8 5 L8 9 Z" fill="#2e9e4f"/><path d="M10 5 H14.5 L12.2 9 Z" fill="#d13438"/><path d="M2.5 11.2 H15.5" stroke="#8a8886" stroke-width="1"/></svg>
<svg class="s" style="left:849.8px;top:320.6px;" width="18" height="18" viewBox="0 0 18 18"><rect x="0.8" y="0.8" width="16.6" height="16.6" fill="#fafafa" stroke="#484644" stroke-width="1.2"/><path d="M0.8 3.5 H17.4" stroke="#a19f9d" stroke-width="2"/><rect x="3" y="6.5" width="3" height="2.2" fill="none" stroke="#8a8886" stroke-width="0.8"/><rect x="3" y="10.5" width="3" height="2.2" fill="none" stroke="#8a8886" stroke-width="0.8"/><path d="M9.5 10 H18 L14.8 13.5 V17.8 H12.6 V13.5 Z" fill="#fafafa" stroke="#484644" stroke-width="1.1"/></svg>
<svg class="s" style="left:875.4px;top:320.6px;" width="18" height="18" viewBox="0 0 18 18"><rect x="0.8" y="0.8" width="16.6" height="16.6" fill="#fafafa" stroke="#484644" stroke-width="1.2"/><path d="M0.8 3.8 H17.4" stroke="#a19f9d" stroke-width="2"/><path d="M0.8 8.2 H17.4 M0.8 12.7 H17.4 M6.3 3 V17.4 M11.8 3 V17.4" stroke="#8a8886" stroke-width="1"/></svg>
<svg class="s" style="left:901px;top:320.6px;" width="18" height="18" viewBox="0 0 18 18"><rect x="0.8" y="0.8" width="16.6" height="16.6" fill="#fafafa" stroke="#484644" stroke-width="1.2"/><path d="M0.8 3.8 H17.4" stroke="#a19f9d" stroke-width="2"/><rect x="11.8" y="4.5" width="5.6" height="12.9" fill="#6cb4ee"/><rect x="0.8" y="12.7" width="16.6" height="4.7" fill="#6cb4ee"/><path d="M0.8 8.2 H17.4 M0.8 12.7 H17.4 M6.3 3 V17.4 M11.8 3 V17.4" stroke="#fafafa" stroke-width="0.9"/><rect x="0.8" y="0.8" width="16.6" height="16.6" fill="none" stroke="#484644" stroke-width="1.2"/></svg>
<svg class="s" style="left:926.6px;top:320.6px;" width="18" height="18" viewBox="0 0 18 18"><text x="9" y="13.6" font-family="Liberation Sans" font-weight="bold" font-size="15" fill="#2b7cd3" text-anchor="middle">R</text></svg>
<svg class="s" style="left:952.2px;top:320.6px;" width="18" height="18" viewBox="0 0 18 18"><text x="8.8" y="13" font-family="Liberation Sans" font-weight="bold" font-size="15" fill="#2b7cd3" text-anchor="middle" textLength="18" lengthAdjust="spacingAndGlyphs">Py</text></svg>
<svg class="s" style="left:824.2px;top:346.1px;" width="18" height="18" viewBox="0 0 18 18"><path d="M1.2 0.3 V16.6 H17.5" fill="none" stroke="#484644" stroke-width="1.3"/><path d="M1.5 3.5 H11" stroke="#2b7cd3" stroke-width="1"/><circle cx="13" cy="3.5" r="2" fill="#6cb4ee" stroke="#2b7cd3" stroke-width="1"/><path d="M1.5 7.5 H10 M1.5 11.5 H8" stroke="#8a8886" stroke-width="1"/><circle cx="10" cy="7.5" r="1" fill="#8a8886"/><circle cx="8" cy="11.5" r="1" fill="#8a8886"/></svg>
<svg class="s" style="left:849.8px;top:346.1px;" width="18" height="18" viewBox="0 0 18 18"><rect x="0.8" y="5.8" width="5" height="3.8" fill="#6cb4ee" stroke="#2b7cd3" stroke-width="1"/><rect x="10.8" y="0.8" width="6.4" height="3.6" fill="#6cb4ee" stroke="#2b7cd3" stroke-width="1"/><rect x="10.8" y="6" width="6.4" height="3.6" fill="#6cb4ee" stroke="#2b7cd3" stroke-width="1"/><rect x="10.8" y="11.2" width="6.4" height="3.6" fill="#6cb4ee" stroke="#2b7cd3" stroke-width="1"/><path d="M5.8 7.7 H8.5 M10.8 2.6 Q8.5 2.6 8.5 5 V10.5 Q8.5 13 10.8 13 M8.5 7.7 H10.8" fill="none" stroke="#484644" stroke-width="1.1"/></svg>
<svg class="s" style="left:875.4px;top:346.1px;" width="18" height="18" viewBox="0 0 18 18"><path d="M0.8 1 H17.4 V12 H6.5 L3.4 15.4 V12 H0.8 Z" fill="#fafafa" stroke="#2b7cd3" stroke-width="1.2"/></svg>
<svg class="s" style="left:901px;top:346.1px;" width="18" height="18" viewBox="0 0 18 18"><path d="M1.8 0.8 H11 L15.5 5.2 V17.2 H1.8 Z" fill="#fafafa" stroke="#484644" stroke-width="1.1"/><path d="M11 0.8 V5.2 H15.5" fill="none" stroke="#484644" stroke-width="1"/><circle cx="3.5" cy="6.5" r="1.4" fill="#6cb4ee" stroke="#2b7cd3" stroke-width="0.8"/><path d="M6 7 H13 M6 10 H11.5" stroke="#2b7cd3" stroke-width="1"/></svg>
<svg class="s" style="left:926.6px;top:346.1px;" width="18" height="18" viewBox="0 0 18 18"><path d="M4.5 1.2 H13.5 V8 Q13.5 12.2 9 12.2 Q4.5 12.2 4.5 8 Z" fill="#fafafa" stroke="#484644" stroke-width="1.2"/><path d="M4.5 3 H1.5 Q1.5 8 4.8 9 M13.5 3 H16.5 Q16.5 8 13.2 9" fill="none" stroke="#484644" stroke-width="1.1"/><path d="M4.5 1.8 H13.5" stroke="#2b7cd3" stroke-width="2"/><path d="M9 12.2 V14.5" stroke="#484644" stroke-width="1.2"/><path d="M5 17.2 Q5 14.6 9 14.6 Q13 14.6 13 17.2 Z" fill="#6cb4ee" stroke="#2b7cd3" stroke-width="1"/></svg>
<svg class="s" style="left:952.2px;top:346.1px;" width="18" height="18" viewBox="0 0 18 18"><path d="M1.8 0.8 H11 L15.8 5.5 V17.4 H1.8 Z" fill="#fafafa" stroke="#484644" stroke-width="1.2"/><path d="M11 0.8 V5.5 H15.8" fill="none" stroke="#484644" stroke-width="1"/><path d="M5.5 15 V12.5 M8.5 15 V10.5 M11.5 15 V8.5" stroke="#484644" stroke-width="1.8"/></svg>
<svg class="s" style="left:824.2px;top:371.6px;" width="18" height="18" viewBox="0 0 18 18"><rect x="2.5" y="3.2" width="14.8" height="13" fill="#fafafa" stroke="#8a8886" stroke-width="1.1"/><text x="10.5" y="12" font-family="Liberation Sans" font-size="7.4" fill="#2b7cd3" text-anchor="middle">123</text><path d="M3.5 14.4 H16.5" stroke="#8a8886" stroke-width="1.3"/><path d="M3.8 0.2 H8.5 L5.8 4.8 H8.2 L1.6 12 L3.4 6.4 H1.2 Z" fill="#f5a623" stroke="#e07b00" stroke-width="0.6"/></svg>
<svg class="s" style="left:849.8px;top:371.6px;" width="18" height="18" viewBox="0 0 18 18"><path d="M4.5 2 H16.5 V11" fill="none" stroke="#2b7cd3" stroke-width="1.4"/><path d="M1.8 9 V17 H15" fill="none" stroke="#2b7cd3" stroke-width="1.4"/><path d="M6 16 L9 12 L13 11 L11 6 L15 4" fill="none" stroke="#6cb4ee" stroke-width="2.2"/><path d="M0.5 0.5 H5 V6 L2.8 9 L0.5 6 Z" fill="#e8852c"/><circle cx="15.5" cy="15.3" r="2.3" fill="#e8852c"/><circle cx="17" cy="11" r="1.3" fill="#e8852c"/></svg>
<svg class="s" style="left:875.4px;top:371.6px;" width="18" height="18" viewBox="0 0 18 18"><path d="M9 1 L17 9 L9 17 L1 9 Z" fill="none" stroke="#9b4fc0" stroke-width="1.2"/><path d="M5 5 L13 13 M13 5 L5 13" stroke="#9b4fc0" stroke-width="1.2"/><path d="M9 1 L5 5 M9 17 L13 13" stroke="#9b4fc0" stroke-width="1.2"/></svg>
<svg class="s" style="left:901px;top:371.6px;" width="18" height="18" viewBox="0 0 18 18"><path d="M0.8 2.5 H10.5 L17 9.2 L10.5 16 H0.8 L7 9.2 Z" fill="#fafafa" stroke="#2b7cd3" stroke-width="1.2"/><path d="M5.8 15.5 L12.5 9" stroke="#2b7cd3" stroke-width="1.2"/></svg>
<svg class="s" style="left:926.6px;top:371.6px;" width="18" height="18" viewBox="0 0 18 18"><circle cx="4.5" cy="7.4" r="1" fill="#8a8886"/><circle cx="9.3" cy="7.4" r="1" fill="#8a8886"/><circle cx="14.1" cy="7.4" r="1" fill="#8a8886"/></svg>
<div class="r" style="left:815px;top:397px;width:164px;height:1px;background:#e1dfdd;"></div>
<div class="r" style="left:974px;top:400px;width:5px;height:98px;background:#c8c6c4;border-radius:3px"></div>
<div class="t" style="left:826px;top:405.0px;font-size:10.6px;color:#3b3a39;font-weight:normal;">Y-axis</div>
<div class="r" style="left:819px;top:426px;width:153px;height:29px;background:#fff;border:1px dotted #b3b0ad;"></div>
<div class="r" style="left:821px;top:428px;width:150.6px;height:20px;background:#edebe9;border:1px solid #e1dfdd;border-radius:2px;box-sizing:border-box"></div>
<div class="t" style="left:825.7px;top:429.7px;font-size:10.6px;color:#323130;font-weight:normal;">Product Name</div>
<svg class="s" style="left:943px;top:435px;" width="12" height="7" viewBox="0 0 12 7"><path d="M0.8 0.8 L6 6 L11.2 0.8" fill="none" stroke="#605e5c" stroke-width="1"/></svg>
<svg class="s" style="left:960px;top:434px;" width="8" height="8" viewBox="0 0 8 8"><path d="M0.5 0.5 L7.5 7.5 M7.5 0.5 L0.5 7.5" fill="none" stroke="#3b3a39" stroke-width="1.1"/></svg>
<div class="t" style="left:826px;top:465.8px;font-size:10.6px;color:#3b3a39;font-weight:normal;">X-axis</div>
<div class="r" style="left:819px;top:487px;width:153px;height:29px;background:#fff;border:1px dotted #b3b0ad;"></div>
<div class="r" style="left:821px;top:489px;width:150.6px;height:20px;background:#edebe9;border:1px solid #e1dfdd;border-radius:2px;box-sizing:border-box"></div>
<div class="t" style="left:825.4px;top:490.9px;font-size:10.6px;color:#323130;font-weight:normal;">Sum of Net Revenue ...</div>
<svg class="s" style="left:943px;top:496px;" width="12" height="7" viewBox="0 0 12 7"><path d="M0.8 0.8 L6 6 L11.2 0.8" fill="none" stroke="#605e5c" stroke-width="1"/></svg>
<svg class="s" style="left:960px;top:495px;" width="8" height="8" viewBox="0 0 8 8"><path d="M0.5 0.5 L7.5 7.5 M7.5 0.5 L0.5 7.5" fill="none" stroke="#3b3a39" stroke-width="1.1"/></svg>
<div class="t" style="left:826px;top:526.5px;font-size:10.6px;color:#3b3a39;font-weight:normal;">Legend</div>
<div class="r" style="left:819px;top:547.6px;width:153px;height:23px;background:#fff;border:1px dotted #b3b0ad;"></div>
<div class="t" style="left:828.2px;top:550.9px;font-size:10.6px;color:#3b3a39;font-weight:normal;">Add data fields here</div>
<div class="t" style="left:826px;top:581.2px;font-size:10.6px;color:#3b3a39;font-weight:normal;">Small multiples</div>
<div class="t" style="left:988px;top:126.1px;font-size:13.9px;color:#252423;font-weight:normal;-webkit-text-stroke:0.5px #252423">Data</div>
<svg class="s" style="left:1144px;top:128px;" width="11" height="11" viewBox="0 0 11 11"><path d="M0.8 0.5 L5.5 5.5 L0.8 10.5 M5.5 0.5 L10.2 5.5 L5.5 10.5" fill="none" stroke="#252423" stroke-width="1.1"/></svg>
<div class="r" style="left:984px;top:156px;width:180px;height:25px;background:#fff;border:1px solid #a19f9d;border-bottom:1.6px solid #8a8886;border-radius:2px;box-sizing:border-box"></div>
<svg class="s" style="left:990px;top:161px;" width="14" height="14" viewBox="0 0 14 14"><circle cx="9.2" cy="5.5" r="4.3" fill="none" stroke="#323130" stroke-width="1.1"/><path d="M6.2 8.6 L1.3 13.4" stroke="#323130" stroke-width="1.1"/></svg>
<div class="t" style="left:1010.4px;top:162.0px;font-size:12.2px;color:#3b3a39;font-weight:normal;">Search</div>
<div class="r" style="left:990px;top:187px;width:167px;height:10px;overflow:hidden">
<div class="t" style="left:60px;top:-7.1px;font-size:10.6px;color:#323130;">Stock</div>
<svg style="position:absolute;left:24px;top:-6.5px" width="12" height="12"><rect x="0.5" y="0.5" width="11" height="11" rx="2" fill="none" stroke="#a19f9d"/></svg>
<svg style="position:absolute;left:43px;top:-6.6px" width="11" height="13"><path d="M10 1.5 V0.8 H1 L6 6.5 L1 12.2 H10 V11.5" fill="none" stroke="#323130" stroke-width="1"/></svg>
</div>
<svg class="s" style="left:1014.6px;top:203.1px;" width="12" height="12" viewBox="0 0 12 12"><rect x="0.5" y="0.5" width="11" height="11" rx="2" fill="none" stroke="#a19f9d" stroke-width="1"/></svg>
<div class="t" style="left:1050px;top:201.20000000000002px;font-size:10.6px;color:#323130;font-weight:normal;">Weight</div>
<svg class="s" style="left:1014.6px;top:225.0px;" width="12" height="12" viewBox="0 0 12 12"><rect x="0.5" y="0.5" width="11" height="11" rx="2" fill="none" stroke="#a19f9d" stroke-width="1"/></svg>
<div class="t" style="left:1050px;top:223.13000000000002px;font-size:10.6px;color:#323130;font-weight:normal;">Zip Code</div>
<svg class="s" style="left:1014.6px;top:247.0px;" width="12" height="12" viewBox="0 0 12 12"><rect x="0.5" y="0.5" width="11" height="11" rx="2" fill="none" stroke="#a19f9d" stroke-width="1"/></svg>
<div class="t" style="left:1050px;top:245.06000000000003px;font-size:10.6px;color:#323130;font-weight:normal;">Country Name</div>
<svg class="s" style="left:1014.6px;top:268.9px;" width="12" height="12" viewBox="0 0 12 12"><rect x="0.5" y="0.5" width="11" height="11" rx="2" fill="none" stroke="#a19f9d" stroke-width="1"/></svg>
<div class="t" style="left:1050px;top:266.99px;font-size:10.6px;color:#323130;font-weight:normal;">Exchange Currency</div>
<svg class="s" style="left:1014.6px;top:290.8px;" width="12" height="12" viewBox="0 0 12 12"><rect x="0.5" y="0.5" width="11" height="11" rx="2" fill="none" stroke="#a19f9d" stroke-width="1"/></svg>
<div class="t" style="left:1050px;top:288.91999999999996px;font-size:10.6px;color:#323130;font-weight:normal;">Exchange Rate</div>
<svg class="s" style="left:1014.6px;top:312.8px;" width="12" height="12" viewBox="0 0 12 12"><rect x="0.5" y="0.5" width="11" height="11" rx="2" fill="none" stroke="#a19f9d" stroke-width="1"/></svg>
<div class="t" style="left:1050px;top:310.85px;font-size:10.6px;color:#323130;font-weight:normal;">Gross Product Price</div>
<svg class="s" style="left:1014.6px;top:334.7px;" width="12" height="12" viewBox="0 0 12 12"><rect x="0.5" y="0.5" width="11" height="11" rx="2" fill="none" stroke="#a19f9d" stroke-width="1"/></svg>
<div class="t" style="left:1050px;top:332.78px;font-size:10.6px;color:#323130;font-weight:normal;">Gross Revenue</div>
<svg class="s" style="left:1014.6px;top:356.6px;" width="12" height="12" viewBox="0 0 12 12"><rect x="0.5" y="0.5" width="11" height="11" rx="2" fill="none" stroke="#a19f9d" stroke-width="1"/></svg>
<div class="t" style="left:1050px;top:354.71px;font-size:10.6px;color:#323130;font-weight:normal;">Gross Revenue USD</div>
<svg class="s" style="left:1014.6px;top:378.5px;" width="12" height="12" viewBox="0 0 12 12"><rect x="0.5" y="0.5" width="11" height="11" rx="2" fill="none" stroke="#a19f9d" stroke-width="1"/></svg>
<svg class="s" style="left:1033px;top:377.2px;" width="11" height="15" viewBox="0 0 11 15"><rect x="0.6" y="0.6" width="9.8" height="13.8" rx="1" fill="none" stroke="#323130" stroke-width="1.2"/><rect x="2.3" y="2.3" width="6.4" height="2.4" fill="#605e5c"/><path d="M2 7H9M2 9.5H9M2 12H9M4.3 6V13M6.7 6V13" stroke="#605e5c" stroke-width="0.8"/></svg>
<div class="t" style="left:1050px;top:376.64px;font-size:10.6px;color:#323130;font-weight:normal;">Median Sales</div>
<svg class="s" style="left:1014.6px;top:400.5px;" width="12" height="12" viewBox="0 0 12 12"><rect x="0.5" y="0.5" width="11" height="11" rx="2" fill="none" stroke="#a19f9d" stroke-width="1"/></svg>
<div class="t" style="left:1050px;top:398.57px;font-size:10.6px;color:#323130;font-weight:normal;">Net Revenue</div>
<svg class="s" style="left:1014.6px;top:422.4px;" width="12" height="12" viewBox="0 0 12 12"><rect x="0" y="0" width="11.4" height="11.4" rx="2" fill="#117865"/><path d="M2.4 5.6 L4.6 7.8 L9 3.2" fill="none" stroke="#cfe8e0" stroke-width="1.3"/></svg>
<svg class="s" style="left:1033px;top:422.1px;" width="11" height="13" viewBox="0 0 11 13"><path d="M1 0.9 H10 M1.3 1 L6.3 6.5 L1.3 12 M1 12.1 H10" fill="none" stroke="#484644" stroke-width="1.3"/></svg>
<div class="t" style="left:1050px;top:420.5px;font-size:10.6px;color:#323130;font-weight:normal;">Net Revenue USD</div>
<svg class="s" style="left:1014.6px;top:444.3px;" width="12" height="12" viewBox="0 0 12 12"><rect x="0.5" y="0.5" width="11" height="11" rx="2" fill="none" stroke="#a19f9d" stroke-width="1"/></svg>
<div class="t" style="left:1050px;top:442.42999999999995px;font-size:10.6px;color:#323130;font-weight:normal;">Product Category</div>
<svg class="s" style="left:1014.6px;top:466.3px;" width="12" height="12" viewBox="0 0 12 12"><rect x="0.5" y="0.5" width="11" height="11" rx="2" fill="none" stroke="#a19f9d" stroke-width="1"/></svg>
<div class="t" style="left:1050px;top:464.35999999999996px;font-size:10.6px;color:#323130;font-weight:normal;">Product Description</div>
<svg class="s" style="left:1014.6px;top:488.2px;" width="12" height="12" viewBox="0 0 12 12"><rect x="0" y="0" width="11.4" height="11.4" rx="2" fill="#117865"/><path d="M2.4 5.6 L4.6 7.8 L9 3.2" fill="none" stroke="#cfe8e0" stroke-width="1.3"/></svg>
<div class="t" style="left:1050px;top:486.28999999999996px;font-size:10.6px;color:#323130;font-weight:normal;">Product Name</div>
<svg class="s" style="left:1014.6px;top:510.1px;" width="12" height="12" viewBox="0 0 12 12"><rect x="0.5" y="0.5" width="11" height="11" rx="2" fill="none" stroke="#a19f9d" stroke-width="1"/></svg>
<svg class="s" style="left:1033px;top:509.8px;" width="11" height="13" viewBox="0 0 11 13"><path d="M1 0.9 H10 M1.3 1 L6.3 6.5 L1.3 12 M1 12.1 H10" fill="none" stroke="#484644" stroke-width="1.3"/></svg>
<div class="t" style="left:1050px;top:508.2199999999999px;font-size:10.6px;color:#323130;font-weight:normal;">Quantity Purchased</div>
<svg class="s" style="left:1014.6px;top:532.0px;" width="12" height="12" viewBox="0 0 12 12"><rect x="0.5" y="0.5" width="11" height="11" rx="2" fill="none" stroke="#a19f9d" stroke-width="1"/></svg>
<svg class="s" style="left:1033px;top:530.8px;" width="11" height="15" viewBox="0 0 11 15"><rect x="0.6" y="0.6" width="9.8" height="13.8" rx="1" fill="none" stroke="#323130" stroke-width="1.2"/><rect x="2.3" y="2.3" width="6.4" height="2.4" fill="#605e5c"/><path d="M2 7H9M2 9.5H9M2 12H9M4.3 6V13M6.7 6V13" stroke="#605e5c" stroke-width="0.8"/></svg>
<div class="t" style="left:1050px;top:530.15px;font-size:10.6px;color:#323130;font-weight:normal;">Quarterly Profit</div>
<svg class="s" style="left:1014.6px;top:554.0px;" width="12" height="12" viewBox="0 0 12 12"><rect x="0.5" y="0.5" width="11" height="11" rx="2" fill="none" stroke="#a19f9d" stroke-width="1"/></svg>
<div class="t" style="left:1050px;top:552.08px;font-size:10.6px;color:#323130;font-weight:normal;">Tax Per Product</div>
<svg class="s" style="left:1014.6px;top:575.9px;" width="12" height="12" viewBox="0 0 12 12"><rect x="0.5" y="0.5" width="11" height="11" rx="2" fill="none" stroke="#a19f9d" stroke-width="1"/></svg>
<div class="t" style="left:1050px;top:574.01px;font-size:10.6px;color:#323130;font-weight:normal;">Total Tax</div>
<div class="r" style="left:1152px;top:414px;width:6px;height:160.5px;background:#c8c6c4;border-radius:3px"></div>
<div class="r" style="left:30px;top:573px;width:784px;height:21px;background:#f3f2f1;"></div>
<div class="r" style="left:175px;top:572px;width:115px;height:22px;background:#fff;"></div>
<div class="r" style="left:290px;top:574px;width:35px;height:20px;background:#117865;"></div>
<svg class="s" style="left:301px;top:583px;" width="12" height="12" viewBox="0 0 12 12"><path d="M6.3 1.2 V12 M1.2 6.2 H11.6" stroke="#fff" stroke-width="2.2"/></svg>
<svg class="s" style="left:34.5px;top:585.5px;" width="5" height="7" viewBox="0 0 5 7"><path d="M4.5 0 L0 3.3 L4.5 6.6 Z" fill="#c8c6c4"/></svg>
<svg class="s" style="left:54.6px;top:585.5px;" width="5" height="7" viewBox="0 0 5 7"><path d="M0 0 L4.5 3.3 L0 6.6 Z" fill="#c8c6c4"/></svg>
<div class="r" style="left:65.5px;top:573px;width:1px;height:21px;background:#c8c6c4;"></div>
<div class="r" style="left:174.5px;top:573px;width:1px;height:21px;background:#c8c6c4;"></div>
<div class="t" style="left:84.6px;top:582.0px;font-size:10.22px;color:#3b3a39;font-weight:normal;">Sales Overview</div>
<div class="t" style="left:194.2px;top:582.0px;font-size:11.1px;color:#252423;font-weight:normal;-webkit-text-stroke:0.35px #252423">Profit Overview</div>
</body></html>
